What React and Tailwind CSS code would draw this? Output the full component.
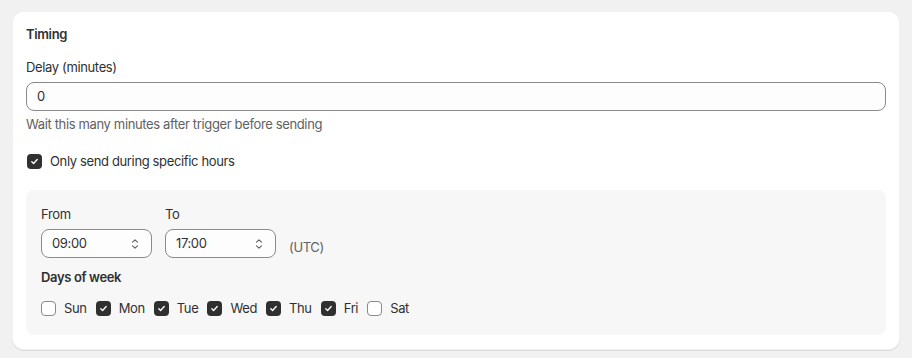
import React, { useState } from 'react';

const DAYS = ['Sun', 'Mon', 'Tue', 'Wed', 'Thu', 'Fri', 'Sat'];

const Check = ({ checked, onClick }) => (
  <span
    onClick={onClick}
    className={`flex h-[15px] w-[15px] shrink-0 items-center justify-center rounded-[4px] cursor-pointer ${
      checked ? 'bg-[#303030]' : 'bg-white border border-[#8a8a8a]'
    }`}
  >
    {checked && (
      <svg width="9" height="9" viewBox="0 0 10 10" fill="none">
        <path d="M2 5.2l2 2 4-4.4" stroke="#fff" strokeWidth="1.5" strokeLinecap="round" strokeLinejoin="round" />
      </svg>
    )}
  </span>
);

const TimeSelect = ({ value }) => (
  <div className="flex h-[29px] w-[111px] items-center justify-between rounded-lg border border-[#8a8a8a] bg-[#fdfdfd] pl-[10px] pr-[12px] text-[13px] text-[#303030]">
    <span>{value}</span>
    <svg width="8" height="12" viewBox="0 0 8 12" fill="none">
      <path d="M1.5 4.2L4 1.8l2.5 2.4M1.5 7.8L4 10.2l2.5-2.4" stroke="#616161" strokeWidth="1.1" strokeLinecap="round" strokeLinejoin="round" />
    </svg>
  </div>
);

export default function App() {
  const [onlyHours, setOnlyHours] = useState(true);
  const [days, setDays] = useState([false, true, true, true, true, true, false]);

  const toggleDay = (i) => setDays(prev => prev.map((d, j) => (j === i ? !d : d)));

  return (
    <div className="min-h-[358px] bg-[#f1f1f1] px-[12px] pt-[11px] text-[13px] tracking-[-0.36px] text-[#303030] font-['Inter','Liberation_Sans',sans-serif]">
      <div className="rounded-xl bg-white px-[14px] pt-[13px] pb-[15px] shadow-[0_1px_0_0_rgba(26,26,26,0.1),inset_0_0_0_1px_rgba(0,0,0,0.06)]">
        {/* Header */}
        <h2 className="text-[13px] font-semibold leading-5">Timing</h2>

        {/* Delay */}
        <div className="mt-[13px] flex flex-col">
          <label className="leading-5">Delay (minutes)</label>
          <div className="mt-[5px] flex h-[29px] items-center rounded-lg border border-[#8a8a8a] bg-[#fdfdfd] px-[10px]">
            0
          </div>
          <p className="mt-[3px] leading-5 text-[#616161]">Wait this many minutes after trigger before sending</p>
        </div>

        {/* Only specific hours */}
        <div className="mt-[17px] flex items-center gap-[8px] pl-[1px] leading-5">
          <Check checked={onlyHours} onClick={() => setOnlyHours(!onlyHours)} />
          <span>Only send during specific hours</span>
        </div>

        {/* Hours panel */}
        <div className="mt-[19px] rounded-lg bg-[#f7f7f7] px-[15px] pt-[14px] pb-[17px]">
          <div className="flex items-end gap-[13px]">
            <div className="flex flex-col gap-[5px]">
              <span className="leading-5">From</span>
              <TimeSelect value="09:00" />
            </div>
            <div className="flex flex-col gap-[5px]">
              <span className="leading-5">To</span>
              <TimeSelect value="17:00" />
            </div>
            <span className="mb-[1px] leading-5 text-[#616161]">(UTC)</span>
          </div>

          <div className="mt-[9px] font-semibold leading-5">Days of week</div>

          <div className="mt-[11px] flex items-center gap-[9px] leading-5">
            {DAYS.map((d, i) => (
              <div key={d} className="flex items-center gap-[8px]">
                <Check checked={days[i]} onClick={() => toggleDay(i)} />
                <span>{d}</span>
              </div>
            ))}
          </div>
        </div>
      </div>
    </div>
  );
}
